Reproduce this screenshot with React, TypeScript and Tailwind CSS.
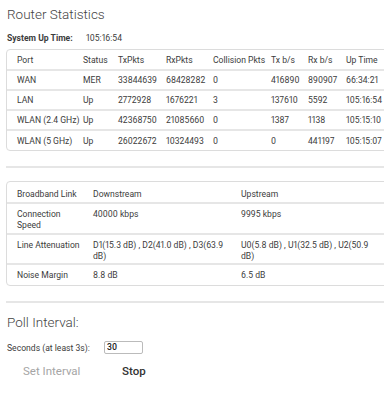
import React from "react";

const font = { fontFamily: 'Roboto, "Liberation Sans", sans-serif' };

const portRows = [
  ["WAN", "MER", "33844639", "68428282", "0", "416890", "890907", "66:34:21"],
  ["LAN", "Up", "2772928", "1676221", "3", "137610", "5592", "105:16:54"],
  ["WLAN (2.4 GHz)", "Up", "42368750", "21085660", "0", "1387", "1138", "105:15:10"],
  ["WLAN (5 GHz)", "Up", "26022672", "10324493", "0", "0", "441197", "105:15:07"],
];

const cols = "grid grid-cols-[66px_35px_48px_47px_58px_37px_38px_70px] items-center";

export default function App() {
  return (
    <div className="w-[384px] h-[400px] overflow-hidden bg-white text-[#3c3c3c] proportional-nums" style={font}>
      <div className="pl-[6px]">
        <h1 className="text-[13.5px] font-light text-[#444] pt-[5px] pl-[1px] leading-[18px]">Router Statistics</h1>
        <div className="flex text-[8.6px] mt-[9px] leading-[12px]">
          <span className="font-bold w-[80px] pl-[1px]">System Up Time:</span>
          <span>105:16:54</span>
        </div>
        <div className="mt-[5px] w-[420px] border border-[#dcdcdc] rounded-[4px] text-[8.6px] leading-[12px]">
          <div className={cols + " h-[19px]"}>
            {["Port", "Status", "TxPkts", "RxPkts", "Collision Pkts", "Tx b/s", "Rx b/s", "Up Time"].map((h) => (
              <div key={h} className="pl-[10px] whitespace-nowrap">{h}</div>
            ))}
          </div>
          {portRows.map((r, i) => (
            <div
              key={i}
              className={cols + " border-t-2 border-[#e6e6e6] " + (i < portRows.length - 1 ? "h-[20px]" : "h-[21px]")}
            >
              {r.map((c, j) => (
                <div key={j} className="pl-[10px] whitespace-nowrap">{c}</div>
              ))}
            </div>
          ))}
        </div>
        <div className="mt-[15px] border-t-2 border-[#e6e6e6] w-[400px]" />
        <div className="mt-[13px] w-[420px] border border-[#dcdcdc] rounded-[4px] text-[8.6px] leading-[11.5px]">
          <div className="grid grid-cols-[76px_148px_1fr] pt-[7px] pb-[1px]">
            <div className="pl-[10px] whitespace-nowrap">Broadband Link</div>
            <div className="pl-[10px]">Downstream</div>
            <div className="pl-[10px]">Upstream</div>
          </div>
          <div className="grid grid-cols-[76px_148px_1fr] border-t-2 border-[#e6e6e6] pt-[5px] pb-[1px]">
            <div className="pl-[10px] pr-[6px]">Connection Speed</div>
            <div className="pl-[10px]">40000 kbps</div>
            <div className="pl-[10px]">9995 kbps</div>
          </div>
          <div className="grid grid-cols-[76px_148px_1fr] border-t-2 border-[#e6e6e6] pt-[5px] pb-[0px]">
            <div className="pl-[10px] whitespace-nowrap">Line Attenuation</div>
            <div className="pl-[10px] pr-[2px]">D1(15.3 dB) , D2(41.0 dB) , D3(63.9 dB)</div>
            <div className="pl-[10px] w-[148px]">U0(5.8 dB) , U1(32.5 dB) , U2(50.9 dB)</div>
          </div>
          <div className="grid grid-cols-[76px_148px_1fr] border-t-2 border-[#e6e6e6] pt-[5px] pb-[4px]">
            <div className="pl-[10px]">Noise Margin</div>
            <div className="pl-[10px]">8.8 dB</div>
            <div className="pl-[10px]">6.5 dB</div>
          </div>
        </div>
        <div className="mt-[15px] border-t-2 border-[#e6e6e6] w-[400px]" />
        <h2 className="text-[13.5px] font-light text-[#444] mt-[10px] pl-[1px] leading-[18px]">Poll Interval:</h2>
        <div className="flex items-center text-[8.6px] mt-[9px]">
          <span className="w-[98px] pl-[1px] pt-[2px]">Seconds (at least 3s):</span>
          <input
            defaultValue="30"
            className="w-[39px] h-[13px] border border-[#bbb] rounded-[2px] text-[8.6px] font-medium text-[#222] px-[2px] outline-none"
          />
        </div>
        <div className="flex items-center text-[11.5px] mt-[8px]">
          <button className="w-[116px] text-left pl-[17px] text-[#a5a5a5]">Set Interval</button>
          <button className="font-medium text-[#333]">Stop</button>
        </div>
      </div>
    </div>
  );
}
